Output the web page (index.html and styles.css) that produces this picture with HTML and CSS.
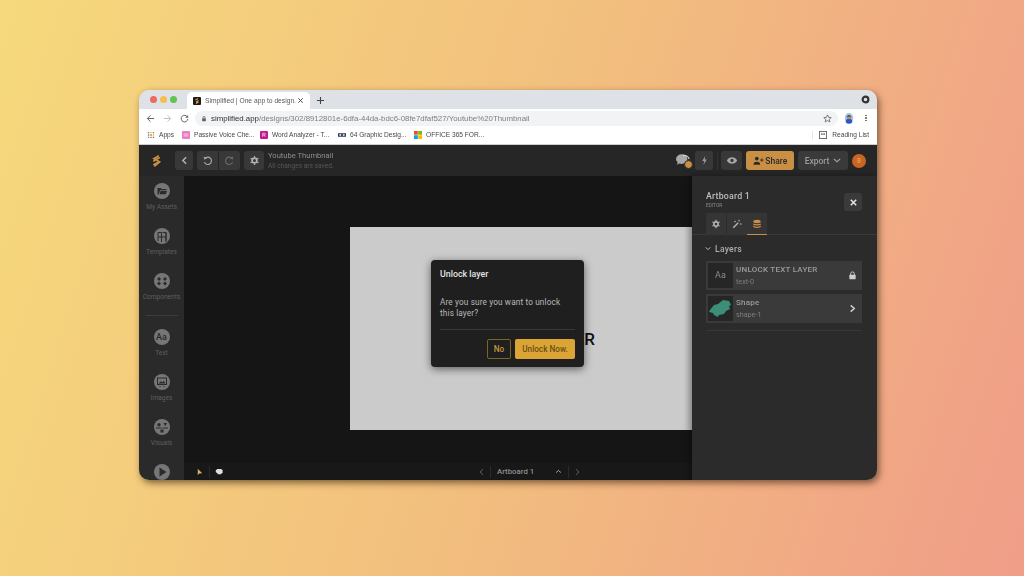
FILE: index.html
```html
<!DOCTYPE html>
<html lang="en">
<head>
    <meta charset="UTF-8">
    <title>Simplified | One app to design</title>
    <link rel="stylesheet" href="styles.css">
</head>
<body>
    <div class="window">

        <!-- Browser tabs -->
        <div class="tabstrip">
            <div class="lights"><i class="red"></i><i class="yellow"></i><i class="green"></i></div>
            <div class="tab">
                <svg class="favicon" viewBox="0 0 8 8"><rect width="8" height="8" rx="1" fill="#1b1b1b"/><path d="M2.500 3 5 1.500M3 5.200 5.500 3.500M3 6.500 5.500 5" stroke="#d99a45" stroke-width="1.200"/></svg>
                <span class="tab-title">Simplified | One app to design.</span>
                <svg class="tab-close" viewBox="0 0 8 8"><path d="M1.500 1.500l5 5M6.500 1.500l-5 5" stroke="#444" stroke-width="1.100"/></svg>
            </div>
            <svg class="new-tab" viewBox="0 0 10 10"><path d="M5 1v8M1 5h8" stroke="#444" stroke-width="1.200"/></svg>
            <svg class="chrome-dot" viewBox="0 0 10 10"><circle cx="5" cy="5" r="3.200" fill="none" stroke="#333" stroke-width="2.400"/></svg>
        </div>

        <!-- Address bar -->
        <div class="toolbar">
            <svg class="nav-icon" viewBox="0 0 10 10"><path d="M9 5H2M5 1.500 1.500 5 5 8.500" fill="none" stroke="#5f6368" stroke-width="1.100"/></svg>
            <svg class="nav-icon" viewBox="0 0 10 10"><path d="M1 5h7M5 1.500 8.500 5 5 8.500" fill="none" stroke="#bcbfc4" stroke-width="1.100"/></svg>
            <svg class="nav-icon" viewBox="0 0 10 10"><path d="M8.300 3.400A3.700 3.700 0 1 0 8.700 5.500" fill="none" stroke="#5f6368" stroke-width="1.100"/><path d="M9 1v3.200H5.800z" fill="#5f6368"/></svg>
            <div class="omnibox">
                <svg class="lock" viewBox="0 0 8 8"><rect x="1.500" y="3.500" width="5" height="4" rx=".6" fill="#5f6368"/><path d="M2.700 3.500V2.400a1.300 1.300 0 0 1 2.600 0v1.100" fill="none" stroke="#5f6368"/></svg>
                <span class="url"><b>simplified.app</b>/designs/302/8912801e-6dfa-44da-bdc6-08fe7dfaf527/Youtube%20Thumbnail</span>
                <svg class="star" viewBox="0 0 10 10"><path d="M5 1l1.200 2.700 2.900.3-2.200 1.900.7 2.900L5 7.300 2.400 8.800l.7-2.900L.9 4l2.900-.3z" fill="none" stroke="#5f6368" stroke-width=".9"/></svg>
            </div>
            <svg class="profile" viewBox="0 0 12 12"><ellipse cx="6" cy="6" rx="5" ry="6" fill="#9cc9e8"/><path d="M2 11a4 4.500 0 0 1 8 0 5 5 0 0 1-8 0z" fill="#2d58c4"/><circle cx="6" cy="5.200" r="2.400" fill="#c98a52"/><path d="M3 6a3 3.400 0 0 1 6 0L8.200 4.200H3.800z" fill="#26324a"/></svg>
            <div class="kebab"><i></i><i></i><i></i></div>
        </div>

        <!-- Bookmarks -->
        <div class="bookmarks">
            <div class="bookmark apps">
                <svg class="bm-icon" viewBox="0 0 9 9">
                    <path d="M1 1h1.500v1.500H1z" fill="#ea4335"/><path d="M3.750 1h1.500v1.500h-1.500z" fill="#fbbc04"/><path d="M6.500 1H8v1.500H6.500z" fill="#34a853"/>
                    <path d="M1 3.750h1.500v1.500H1z" fill="#4285f4"/><path d="M3.750 3.750h1.500v1.500h-1.500z" fill="#ea4335"/><path d="M6.500 3.750H8v1.500H6.500z" fill="#fbbc04"/>
                    <path d="M1 6.500h1.500V8H1z" fill="#34a853"/><path d="M3.750 6.500h1.500V8h-1.500z" fill="#4285f4"/><path d="M6.500 6.500H8V8H6.500z" fill="#ea4335"/>
                </svg>
                <span>Apps</span>
            </div>
            <div class="bookmark passive">
                <svg class="bm-icon" viewBox="0 0 9 9"><rect width="9" height="9" rx="1" fill="#e77fc0"/><path d="M2 3.500h5M2 5.500h5" stroke="#f7cfe6"/></svg>
                <span>Passive Voice Che...</span>
            </div>
            <div class="bookmark word">
                <svg class="bm-icon" viewBox="0 0 9 9"><rect width="9" height="9" rx="1.500" fill="#c2188b"/><path d="M3 2.500v4M3 2.500h2a1 1 0 0 1 0 2H3M5 4.500l1 2" fill="none" stroke="#fff" stroke-width=".7"/></svg>
                <span>Word Analyzer - T...</span>
            </div>
            <div class="bookmark graphic">
                <svg class="bm-icon" viewBox="0 0 9 9"><rect y="2.500" width="9" height="4" fill="#34405e"/><circle cx="2.500" cy="4.500" r="1.100" fill="#dfe3ee"/><circle cx="6.500" cy="4.500" r="1.100" fill="#dfe3ee"/></svg>
                <span>64 Graphic Desig...</span>
            </div>
            <div class="bookmark office">
                <svg class="bm-icon" viewBox="0 0 9 9"><path d="M0 0h4.300v4.300H0z" fill="#f25022"/><path d="M4.700 0H9v4.300H4.700z" fill="#7fba00"/><path d="M0 4.700h4.300V9H0z" fill="#00a4ef"/><path d="M4.700 4.700H9V9H4.700z" fill="#ffb900"/></svg>
                <span>OFFICE 365 FOR...</span>
            </div>
            <div class="reading-list">
                <svg class="bm-icon" viewBox="0 0 9 9"><rect x=".5" y=".5" width="8" height="8" fill="none" stroke="#5f6368"/><path d="M2.500 2.500h1.500v2H2.500zM5 2.500h1.500v2H5z" fill="#5f6368"/></svg>
                <span>Reading List</span>
            </div>
        </div>

        <!-- Editor -->
        <div class="app">
            <header class="topbar">
                <svg class="logo" viewBox="0 0 12 14"><path d="M8 1.500 3 4.500 9.500 8 4 12.500M3 7 9 3.500M3 11 9 7.500" fill="none" stroke="#c98f45" stroke-width="1.700" stroke-linecap="round"/></svg>
                <button class="tbtn back"><svg viewBox="0 0 10 10"><path d="M6.500 2 3.500 5l3 3" fill="none" stroke="#b5b5b5" stroke-width="1.300"/></svg></button>
                <div class="history">
                    <button class="tbtn undo"><svg viewBox="0 0 12 12"><path d="M3.200 3.800A4 4 0 1 1 2.600 7.800" fill="none" stroke="#a8a8a8" stroke-width="1.200"/><path d="M1.800 1.500 2.400 5 5.600 3.800z" fill="#a8a8a8"/></svg></button>
                    <button class="tbtn redo"><svg viewBox="0 0 12 12"><path d="M8.800 3.800A4 4 0 1 0 9.400 7.800" fill="none" stroke="#6a6a6a" stroke-width="1.200"/><path d="M10.200 1.500 9.600 5 6.400 3.800z" fill="#6a6a6a"/></svg></button>
                </div>
                <button class="tbtn gear"><svg viewBox="0 0 12 12"><circle cx="6" cy="6" r="2.600" fill="none" stroke="#b0b0b0" stroke-width="1.900"/><path d="M6 1v10M1.700 3.500l8.600 5M10.300 3.500l-8.600 5" stroke="#b0b0b0" stroke-width="1.400" stroke-dasharray="1.600 6.800"/></svg></button>
                <div class="doc">
                    <div class="doc-name">Youtube Thumbnail</div>
                    <div class="doc-status">All changes are saved.</div>
                </div>
                <div class="top-right">
                    <div class="comments">
                        <svg viewBox="0 0 18 16"><path d="M1 7a6.500 5.500 0 0 1 13 0 6.500 5.500 0 0 1-9 5l-3 1.500 1-3A5 5 0 0 1 1 7z" fill="#a9a9a9"/><path d="M9 3a5.500 4.500 0 0 1 7 4" fill="none" stroke="#d0d0d0" stroke-width="1.400"/></svg>
                        <span class="comment-badge"></span>
                    </div>
                    <button class="tbtn flash"><svg viewBox="0 0 10 12"><path d="M5.800 1 2.500 6.500h2.200L3.800 11 7.500 5H5.300z" fill="#9a9a9a"/></svg></button>
                    <span class="top-sep"></span>
                    <button class="tbtn eye"><svg viewBox="0 0 14 10"><path d="M1 5c1.500-2.500 3.500-3.800 6-3.800s4.500 1.300 6 3.800c-1.500 2.500-3.500 3.800-6 3.800S2.500 7.500 1 5z" fill="#a8a8a8"/><circle cx="7" cy="5" r="1.900" fill="#3a3a3a"/></svg></button>
                    <button class="share">
                        <svg viewBox="0 0 13 10"><circle cx="4.500" cy="2.700" r="2.200" fill="#2b2b2b"/><path d="M.5 10a4 3.500 0 0 1 8 0z" fill="#2b2b2b"/><path d="M10.500 2.500v4M8.500 4.500h4" stroke="#2b2b2b" stroke-width="1.100"/></svg>
                        Share
                    </button>
                    <button class="export">
                        Export
                        <svg viewBox="0 0 10 6"><path d="M1 1l4 3.500L9 1" fill="none" stroke="#a5a5a5" stroke-width="1.300"/></svg>
                    </button>
                    <div class="avatar">B</div>
                </div>
            </header>

            <div class="workspace">
                <!-- Left tools -->
                <nav class="sidebar">
                    <div class="tool">
                        <svg viewBox="0 0 16 16"><circle cx="8" cy="8" r="8"/><path d="M3.500 5h3.200l1 1h4.800v1.200H6l-1.200 4H3.500zM6.500 8h6.500l-1.300 3.300H5.500z" fill="#2b2b2b"/></svg>
                        <span>My Assets</span>
                    </div>
                    <div class="tool">
                        <svg viewBox="0 0 16 16"><circle cx="8" cy="8" r="8"/><path d="M4 4.500h3.500V14M8.500 4.500H12V14M4 4.500V13M12 4.500V13M4 9h8" fill="none" stroke="#2b2b2b" stroke-width="1"/></svg>
                        <span>Templates</span>
                    </div>
                    <div class="tool">
                        <svg viewBox="0 0 16 16"><circle cx="8" cy="8" r="8"/><path d="M5 4l2 2-2 2-2-2zM11 4l2 2-2 2-2-2zM5 8.500l2 2-2 2-2-2zM11 8.500l2 2-2 2-2-2z" fill="#2b2b2b"/></svg>
                        <span>Components</span>
                    </div>
                    <div class="tool-sep"></div>
                    <div class="tool">
                        <div class="text-tool">Aa</div>
                        <span>Text</span>
                    </div>
                    <div class="tool">
                        <svg viewBox="0 0 16 16"><circle cx="8" cy="8" r="8"/><rect x="3.500" y="4" width="9" height="6.500" fill="none" stroke="#2b2b2b"/><path d="M4.500 9.500l2.200-2.300 1.500 1.300 1.500-1.700 1.800 2.700z" fill="#2b2b2b"/><path d="M5.500 12.500h1M9.500 12.500h1" stroke="#2b2b2b"/></svg>
                        <span>Images</span>
                    </div>
                    <div class="tool">
                        <svg viewBox="0 0 16 16"><circle cx="8" cy="8" r="8"/><circle cx="5" cy="5.800" r="1.700" fill="#2b2b2b"/><path d="M9.500 4h3.500l-1.700 3.300z" fill="#2b2b2b"/><path d="M2 8.500h5.500v1H2zM8.500 8.500H14v1H8.500z" fill="#2b2b2b"/><rect x="6.500" y="10.500" width="3" height="3" fill="#2b2b2b"/></svg>
                        <span>Visuals</span>
                    </div>
                    <div class="tool">
                        <svg viewBox="0 0 16 16"><circle cx="8" cy="8" r="8"/><path d="M5.500 3.500v9l7-4.500z" fill="#2b2b2b"/></svg>
                    </div>
                </nav>

                <!-- Canvas -->
                <main class="canvas">
                    <div class="stage">
                        <div class="artboard"><span class="art-text">UNLOCK TEXT LAYER</span></div>
                        <div class="dialog">
                            <h3>Unlock layer</h3>
                            <p>Are you sure you want to unlock this layer?</p>
                            <div class="dialog-actions">
                                <button class="btn-no">No</button>
                                <button class="btn-yes">Unlock Now.</button>
                            </div>
                        </div>
                    </div>
                    <div class="bottombar">
                        <svg class="cursor" viewBox="0 0 8 10"><path d="M1 0.500v8.500l2.200-2 3.800-.5z" fill="#d6b25e"/></svg>
                        <span class="bar-sep"></span>
                        <svg class="hand" viewBox="0 0 10 8"><path d="M1 2.500 3 .8h4.500L9.500 2v3L7.500 7.500H4L1 4.500z" fill="#dedede"/></svg>
                        <div class="pager">
                            <svg class="pg-arrow" viewBox="0 0 6 10"><path d="M4.500 1.500 1.500 5l3 3.500" fill="none" stroke="#666" stroke-width="1.200"/></svg>
                            <span class="bar-sep"></span>
                            <span class="pg-name">Artboard 1</span>
                            <svg class="pg-up" viewBox="0 0 10 6"><path d="M1.500 4.500 5 1.500l3.500 3" fill="none" stroke="#bdbdbd" stroke-width="1.200"/></svg>
                            <span class="bar-sep"></span>
                            <svg class="pg-arrow" viewBox="0 0 6 10"><path d="M1.500 1.500 4.500 5l-3 3.500" fill="none" stroke="#666" stroke-width="1.200"/></svg>
                        </div>
                    </div>
                </main>

                <!-- Right panel -->
                <aside class="panel">
                    <div class="panel-head">
                        <div>
                            <div class="panel-title">Artboard 1</div>
                            <div class="panel-sub">EDITOR</div>
                        </div>
                        <button class="panel-close"><svg viewBox="0 0 10 10"><path d="M2 2l6 6M8 2l-6 6" stroke="#e4e4e4" stroke-width="1.700"/></svg></button>
                    </div>
                    <div class="panel-tabs">
                        <div class="ptab"><svg viewBox="0 0 12 12"><circle cx="6" cy="6" r="2.600" fill="none" stroke="#b5b5b5" stroke-width="1.900"/><path d="M6 1v10M1.700 3.500l8.600 5M10.300 3.500l-8.600 5" stroke="#b5b5b5" stroke-width="1.400" stroke-dasharray="1.600 6.800"/></svg></div>
                        <div class="ptab"><svg viewBox="0 0 12 12"><path d="M1.500 10.500 7.500 4.500" stroke="#b5b5b5" stroke-width="1.800"/><path d="M8.500 1v2M7.500 2h2M10.500 5v2M9.500 6h2M3.500 2v2M2.500 3h2" stroke="#b5b5b5" stroke-width=".8"/></svg></div>
                        <div class="ptab active"><svg viewBox="0 0 12 12"><ellipse cx="6" cy="3" rx="4.500" ry="2" fill="#c98f45"/><path d="M1.500 5.800C3 7.400 9 7.400 10.500 5.800M1.500 8.500C3 10.400 9 10.400 10.500 8.500" fill="none" stroke="#c98f45" stroke-width="1.500"/></svg></div>
                    </div>
                    <div class="layers-head">
                        <svg viewBox="0 0 8 6"><path d="M1 1.500 4 4.500l3-3" fill="none" stroke="#c4c4c4" stroke-width="1.300"/></svg>
                        Layers
                    </div>
                    <div class="layer">
                        <div class="layer-thumb aa">Aa</div>
                        <div class="layer-info">
                            <div class="layer-name">UNLOCK TEXT LAYER</div>
                            <div class="layer-id">text-0</div>
                        </div>
                        <svg class="layer-end" viewBox="0 0 10 10"><rect x="1.500" y="4.300" width="7" height="5" rx=".8" fill="#cfcfcf"/><path d="M3 4.500V3a2 2 0 0 1 4 0v1.500" fill="none" stroke="#cfcfcf" stroke-width="1.100"/></svg>
                    </div>
                    <div class="layer">
                        <div class="layer-thumb"><svg viewBox="0 0 24 24"><path d="M2 14 6 9l4-1 5-4 6 1 2 4-2 1 1 3-4 2-2 3-5 1-1 2-4-2-1-2-4-1z" fill="#3b8f78"/></svg></div>
                        <div class="layer-info">
                            <div class="layer-name">Shape</div>
                            <div class="layer-id">shape-1</div>
                        </div>
                        <svg class="layer-end" viewBox="0 0 10 10"><path d="M3 1.500 7 5 3 8.500" fill="none" stroke="#cfcfcf" stroke-width="1.600"/></svg>
                    </div>
                    <div class="panel-rule"></div>
                </aside>
            </div>
        </div>
    </div>
</body>
</html>
```

FILE: styles.css
```css
/* Page */
* {
    box-sizing: border-box;
}

html, body {
    margin: 0;
    height: 576px;
    overflow: hidden;
}

body {
    padding: 90px 0 0 139px;
    background: linear-gradient(108deg, #f6d97c 0%, #f2bf7e 50%, #f09d88 100%);
    font-family: 'Roboto', 'Liberation Sans', sans-serif;
}

button {
    border: 0;
    padding: 0;
    font-family: inherit;
}

svg {
    display: block;
}

.window {
    width: 738px;
    height: 390px;
    border-radius: 10px;
    overflow: hidden;
    display: flex;
    flex-direction: column;
    box-shadow: 2px 3px 7px rgba(60, 40, 20, 0.65);
    filter: blur(0.35px);
}

/* Browser tabs */
.tabstrip {
    height: 19px;
    background: #dee1e6;
    display: flex;
    align-items: flex-end;
    flex: none;
}

.lights {
    display: flex;
    gap: 3px;
    margin: 0 0 6px 10.500px;
    width: 37.500px;
}

.lights i {
    width: 7px;
    height: 7px;
    border-radius: 50%;
}

.red { background: #ec6a5e; }
.yellow { background: #f4bf4f; }
.green { background: #61c554; }

.tab {
    width: 123px;
    height: 17px;
    background: #fff;
    border-radius: 5px 5px 0 0;
    display: flex;
    align-items: center;
    padding: 0 5px 0 6px;
}

.favicon {
    width: 8px;
    height: 8px;
    flex: none;
}

.tab-title {
    font: 6.700px 'Liberation Sans', sans-serif;
    color: #55585c;
    margin-left: 4px;
    width: 88px;
    white-space: nowrap;
}

.tab-close {
    width: 7px;
    height: 7px;
    margin-left: 4px;
}

.new-tab {
    width: 9px;
    height: 9px;
    margin: 0 0 4px 6px;
}

.chrome-dot {
    width: 9px;
    height: 9px;
    margin: 0 7.500px 5px auto;
}

/* Address bar */
.toolbar {
    height: 17px;
    background: #fff;
    display: flex;
    align-items: center;
    padding: 1px 0 0 7px;
    flex: none;
}

.nav-icon {
    width: 9px;
    height: 9px;
    margin-right: 8px;
}

.omnibox {
    width: 643px;
    height: 15px;
    margin-left: -2px;
    border-radius: 8px;
    background: #f1f3f4;
    display: flex;
    align-items: center;
    padding: 0 6px 0 6px;
}

.lock {
    width: 6px;
    height: 7px;
    flex: none;
}

.url {
    margin-left: 4px;
    font: 7.850px 'Liberation Sans', sans-serif;
    color: #7d8083;
    white-space: nowrap;
}

.url b {
    font-weight: 400;
    color: #303134;
}

.star {
    width: 9px;
    height: 9px;
    margin-left: auto;
}

.profile {
    width: 10px;
    height: 12px;
    margin-left: 6px;
}

.kebab {
    display: flex;
    flex-direction: column;
    gap: 1px;
    margin-left: 11px;
}

.kebab i {
    width: 1.500px;
    height: 1.500px;
    border-radius: 50%;
    background: #5f6368;
}

/* Bookmarks */
.bookmarks {
    height: 19px;
    background: #fff;
    border-bottom: 1px solid #d0d0d0;
    display: flex;
    align-items: center;
    padding: 0 0 1px 8px;
    flex: none;
}

.bookmark,
.reading-list {
    display: flex;
    align-items: center;
    gap: 4px;
    font: 6.600px 'Liberation Sans', sans-serif;
    color: #44474a;
    white-space: nowrap;
}

.bm-icon {
    width: 8px;
    height: 8px;
    flex: none;
}

.apps { width: 35px; }
.passive { width: 78px; }
.word { width: 78px; }
.graphic { width: 76px; }
.office { width: 90px; }

.reading-list {
    margin-left: auto;
    margin-right: 8px;
    padding-left: 6px;
    border-left: 1px solid #e4e4e4;
    gap: 5px;
}

/* Editor top bar */
.app {
    flex: 1;
    min-height: 0;
    display: flex;
    flex-direction: column;
}

.topbar {
    height: 31px;
    background: #262626;
    display: flex;
    align-items: center;
    padding: 0 11px 0 12px;
    flex: none;
}

.logo {
    width: 11px;
    height: 14px;
    margin-right: 13px;
}

.tbtn {
    height: 19px;
    background: #383838;
    border-radius: 3px;
    display: flex;
    align-items: center;
    justify-content: center;
}

.tbtn svg {
    width: 11px;
    height: 11px;
}

.back {
    width: 18px;
    margin-right: 4px;
}

.history {
    display: flex;
    gap: 1px;
    margin-right: 4px;
}

.undo, .redo {
    width: 21px;
}

.undo { border-radius: 3px 0 0 3px; }
.redo { border-radius: 0 3px 3px 0; }

.gear {
    width: 20px;
}

.doc {
    margin-left: 4px;
    white-space: nowrap;
}

.doc-name {
    font-size: 7.600px;
    line-height: 10px;
    color: #8f8f8f;
}

.doc-status {
    font-size: 6.600px;
    line-height: 9px;
    color: #575757;
    margin-top: 1px;
}

.top-right {
    margin-left: auto;
    display: flex;
    align-items: center;
}

.comments {
    width: 17px;
    height: 15px;
    position: relative;
    margin-right: 3px;
}

.comments svg {
    width: 16px;
    height: 14px;
}

.comment-badge {
    position: absolute;
    right: -1px;
    bottom: -1px;
    width: 9px;
    height: 9px;
    border-radius: 50%;
    background: #c98f45;
    border: 1px solid #2b2b2b;
}

.flash {
    width: 18px;
}

.top-sep {
    width: 1px;
    height: 19px;
    background: #333;
    margin: 0 3.500px;
}

.eye {
    width: 21px;
}

.eye svg {
    width: 12px;
    height: 9px;
}

.share {
    width: 48px;
    height: 19px;
    margin-left: 4px;
    border-radius: 3px;
    background: #c98f45;
    color: #2b2b2b;
    font-size: 8.500px;
    font-weight: 500;
    display: flex;
    align-items: center;
    justify-content: center;
    gap: 1.500px;
}

.share svg {
    width: 11px;
    height: 9px;
}

.export {
    width: 50px;
    height: 19px;
    margin-left: 4px;
    border-radius: 3px;
    background: #3a3a3a;
    color: #9d9d9d;
    font-size: 8.500px;
    font-weight: 500;
    display: flex;
    align-items: center;
    justify-content: center;
    gap: 4px;
}

.export svg {
    width: 8px;
    height: 5px;
}

.avatar {
    width: 14px;
    height: 14px;
    margin-left: 4px;
    border-radius: 50%;
    background: #c8651f;
    color: #e2a77c;
    font-size: 6.500px;
    display: flex;
    align-items: center;
    justify-content: center;
}

/* Workspace */
.workspace {
    flex: 1;
    min-height: 0;
    display: flex;
}

.sidebar {
    width: 45px;
    background: #2a2a2a;
    padding-top: 7px;
    overflow: hidden;
    flex: none;
}

.tool {
    height: 45px;
    display: flex;
    flex-direction: column;
    align-items: center;
    font-size: 6.600px;
    color: #5f5f5f;
}

.tool svg {
    width: 16px;
    height: 16px;
    fill: #767676;
    margin-bottom: 4px;
}

.tool span {
    line-height: 9px;
    white-space: nowrap;
}

.text-tool {
    width: 16px;
    height: 16px;
    margin-bottom: 4px;
    border-radius: 50%;
    background: #767676;
    color: #2b2b2b;
    font-size: 9px;
    font-weight: 500;
    line-height: 16px;
    text-align: center;
}

.tool-sep {
    height: 1px;
    width: 32px;
    margin: -3px auto 13px;
    background: #3d3d3d;
}

.canvas {
    flex: 1;
    min-width: 0;
    display: flex;
    flex-direction: column;
    background: #151515;
}

.stage {
    flex: 1;
    position: relative;
    overflow: hidden;
}

.artboard {
    position: absolute;
    left: 166px;
    top: 51px;
    width: 342px;
    height: 203px;
    background: #cbcbcb;
}

.art-text {
    position: absolute;
    right: 97px;
    top: 102px;
    font: 500 17px 'Roboto', sans-serif;
    line-height: 20px;
    color: #111;
    white-space: nowrap;
}

.dialog {
    position: absolute;
    left: 247px;
    top: 83.500px;
    width: 153px;
    height: 107px;
    padding: 9px;
    border-radius: 4px;
    background: #1f1f1f;
    box-shadow: 0 2px 8px rgba(0, 0, 0, 0.55);
}

.dialog h3 {
    margin: 0;
    font-size: 8.800px;
    font-weight: 500;
    line-height: 11px;
    color: #e3e3e3;
}

.dialog p {
    margin: 17px 0 9.500px;
    font-size: 8.200px;
    line-height: 11.500px;
    letter-spacing: 0.15px;
    color: #b9b9b9;
    border-bottom: 1px solid #383838;
    height: 33px;
}

.dialog-actions {
    display: flex;
    justify-content: flex-end;
    gap: 4px;
}

.btn-no {
    width: 24px;
    height: 20px;
    border: 1px solid #7d6426;
    border-radius: 2px;
    background: transparent;
    color: #c69a34;
    font-size: 8.200px;
    font-weight: 500;
}

.btn-yes {
    width: 60px;
    height: 20px;
    border-radius: 2px;
    background: #dba535;
    color: #6a5016;
    font-size: 8.200px;
    font-weight: 500;
}

.bottombar {
    height: 17px;
    background: #181818;
    display: flex;
    align-items: center;
    padding-left: 13px;
    flex: none;
}

.cursor {
    width: 6px;
    height: 8px;
}

.hand {
    width: 8px;
    height: 7px;
    margin-left: 5px;
}

.bar-sep {
    width: 1px;
    height: 12px;
    background: #2a2a2a;
    margin-left: 6px;
}

.pager {
    display: flex;
    align-items: center;
    margin-left: 256px;
}

.pg-arrow {
    width: 5px;
    height: 8px;
}

.pager .bar-sep {
    margin: 0 6px 0 6px;
}

.pg-name {
    width: 58px;
    font-size: 7.800px;
    font-weight: 500;
    color: #8e8e8e;
    white-space: nowrap;
}

.pg-up {
    width: 7px;
    height: 5px;
}

/* Right panel */
.panel {
    width: 185px;
    background: #2b2b2b;
    box-shadow: -3px 0 6px rgba(0, 0, 0, 0.35);
    position: relative;
    flex: none;
}

.panel-head {
    display: flex;
    justify-content: space-between;
    padding: 15px 15px 0 14px;
    height: 37px;
}

.panel-title {
    font-size: 8.800px;
    font-weight: 500;
    line-height: 11px;
    color: #bdbdbd;
    letter-spacing: 0.2px;
}

.panel-sub {
    font-size: 4.800px;
    line-height: 7px;
    color: #8d8d8d;
}

.panel-close {
    width: 18px;
    height: 18px;
    margin-top: 2px;
    border-radius: 3px;
    background: #3a3a3a;
    display: flex;
    align-items: center;
    justify-content: center;
}

.panel-close svg {
    width: 9px;
    height: 9px;
}

.panel-tabs {
    display: flex;
    gap: 0.500px;
    padding-left: 14px;
    height: 22px;
    border-bottom: 1px solid #3a3a3a;
}

.ptab {
    width: 20px;
    height: 22px;
    background: #353535;
    display: flex;
    align-items: center;
    justify-content: center;
}

.ptab svg {
    width: 10px;
    height: 10px;
}

.ptab.active {
    border-bottom: 1px solid #c98f45;
}

.layers-head {
    display: flex;
    align-items: center;
    gap: 4px;
    padding-left: 13px;
    margin-top: 7px;
    height: 13px;
    font-size: 8.600px;
    font-weight: 500;
    letter-spacing: 0.25px;
    color: #adadad;
}

.layers-head svg {
    width: 6px;
    height: 5px;
}

.layer {
    margin: 0 15px 0 14px;
    height: 29px;
    background: #3a3a3a;
    display: flex;
    align-items: center;
    padding: 2px;
}

.layers-head + .layer {
    margin-top: 6px;
    margin-bottom: 4px;
}

.layer-thumb {
    width: 25px;
    height: 25px;
    background: #262626;
    flex: none;
}

.layer-thumb svg {
    width: 24px;
    height: 24px;
}

.layer-thumb.aa {
    font-size: 9px;
    line-height: 25px;
    text-align: center;
    color: #8d8d8d;
}

.layer-info {
    margin-left: 3px;
    flex: 1;
    white-space: nowrap;
}

.layer-name {
    font-size: 8px;
    font-weight: 500;
    line-height: 10px;
    letter-spacing: 0.25px;
    color: #9b9b9b;
}

.layer-id {
    font-size: 7.200px;
    line-height: 9px;
    margin-top: 2px;
    color: #7f7f7f;
}

.layer-end {
    width: 9px;
    height: 9px;
    margin-right: 3px;
}

.panel-rule {
    height: 1px;
    margin: 7px 15px 0 14px;
    background: #383838;
}
```
